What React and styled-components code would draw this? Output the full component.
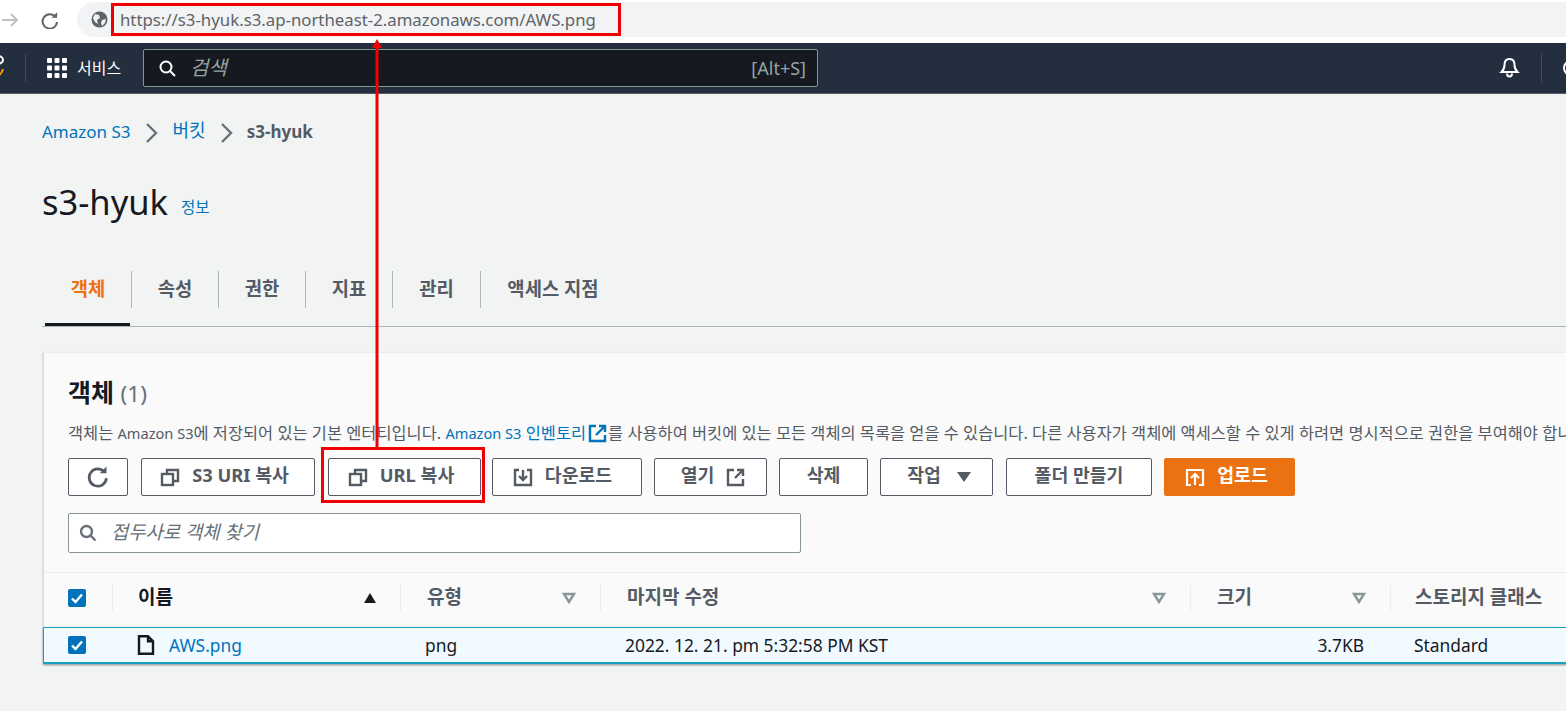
import React from "react";
import styled, { createGlobalStyle } from "styled-components";

const Global = createGlobalStyle`
  html, body { margin: 0; padding: 0; height: 711px; overflow: hidden; background: #f2f3f3; }
  body { font-family: "Noto Sans", "Noto Sans CJK KR", sans-serif; color: #16191f; }
  * { box-sizing: border-box; }
`;
const Page = styled.div`position: relative; width: 1566px; height: 711px; overflow: hidden;`;

const BrowserBar = styled.div`
  height: 43px; background: #fff; display: flex; align-items: flex-start; padding-top: 2px;
`;
const BackIcon = styled.svg`width: 18px; height: 18px; margin: 9px 0 0 1px; flex: none;`;
const ReloadIcon = styled.svg`width: 18px; height: 18px; margin: 9px 0 0 21px; flex: none;`;
const Pill = styled.div`
  flex: 1; height: 35px; margin-left: 19px; background: #f1f3f4;
  border-radius: 18px 0 0 18px; display: flex; align-items: center; padding-left: 14px;
`;
const GlobeIcon = styled.svg`width: 17px; height: 17px; flex: none;`;
const UrlText = styled.span`margin-left: 12px; font-size: 16.8px; color: #5f6368; white-space: nowrap;`;

const Nav = styled.div`
  height: 51px; background: #232f3e; border-bottom: 1px solid #545b64;
  display: flex; align-items: center; color: #fff;
`;
const LogoPiece = styled.svg`width: 4px; height: 26px; flex: none;`;
const NavSep = styled.div`width: 1px; height: 28px; background: #414d5c; flex: none; margin-left: ${p => p.$ml}px;`;
const GridIcon = styled.svg`width: 20px; height: 20px; margin-left: 21px; flex: none;`;
const ServicesLabel = styled.span`margin: 0 0 2px 10px; font-size: 16px; color: #fff; width: 66px; flex: none;`;
const SearchBox = styled.div`
  width: 675px; height: 38px; background: #16191f; border: 1px solid #879596; border-radius: 2px;
  display: flex; align-items: center; padding: 0 11px 0 15px; flex: none;
`;
const SearchGlyph = styled.svg`width: 17px; height: 17px; flex: none;`;
const SearchHint = styled.span`margin: 0 0 3px 14px; flex: 1; font-size: 20px; font-style: italic; color: #95a5a6;`;
const Shortcut = styled.span`font-size: 18px; color: #95a5a6; margin-bottom: 1px;`;
const BellIcon = styled.svg`width: 21px; height: 22px; margin-left: 681px; flex: none;`;
const PartCircle = styled.div`
  width: 16px; height: 16px; border: 2px solid #fff; border-radius: 50%; margin-left: 21px; flex: none;
`;

const Main = styled.main`padding: 0 0 0 42px; width: 1606px;`;
const Crumbs = styled.div`height: 76px; padding-top: 25px; display: flex; align-items: flex-start; font-size: 17px;`;
const CrumbLink = styled.span`
  color: #0073bb; line-height: 26px; font-size: ${p => p.$size || 17}px; margin-top: ${p => (p.$up ? -2 : 0)}px;
`;
const CrumbCurrent = styled.span`color: #545b64; font-weight: 700; line-height: 26px; margin-left: -1px;`;
const CrumbArrow = styled.svg`width: 14px; height: 20px; margin: 4px 14px 0 14px; flex: none;`;

const TitleRow = styled.div`height: 50px; margin-top: 8px; display: flex; align-items: center;`;
const Title = styled.h1`margin: 0 0 2px; font-size: 34.5px; font-weight: 400; color: #16191f; line-height: 50px;`;
const InfoLink = styled.span`margin: 7px 0 0 13px; font-size: 15.5px; color: #0073bb;`;

const Tabs = styled.div`
  margin-top: 43px; height: 56px; border-bottom: 1px solid #aab7b8; display: flex; align-items: flex-start;
`;
const Tab = styled.div`
  position: relative; width: ${p => p.$w}px; height: 55px; flex: none;
  font-size: 18.8px; font-weight: 600; color: ${p => (p.$active ? "#ec7211" : "#545b64")};
  display: flex; justify-content: center;
  margin-left: ${p => p.$ml || 0}px;
`;
const TabInner = styled.div`
  width: 100%; height: 37px; padding-bottom: 4px; display: flex; align-items: center; justify-content: center;
  border-right: ${p => (p.$last ? "none" : "1px solid #aab7b8")};
`;
const TabUnderline = styled.div`
  position: absolute; left: 0; right: 2px; bottom: 0; height: 3px; background: #16191f;
`;

const Card = styled.section`
  margin: 25px 0 0 1px; height: 312px; background: #fafafa; border-left: 1px solid #d5dbdb;
  border-top: 1px solid #eaeded; box-shadow: 0 1px 2px rgba(0,28,36,.2);
`;
const CardHead = styled.div`padding: 23px 0 0 24px; height: 219px;`;
const CardTitle = styled.h2`margin: 0; font-size: 25px; line-height: 32px; font-weight: 700; color: #16191f; height: 32px;`;
const Count = styled.span`font-weight: 400; color: #687078; font-size: 22.5px;`;
const Desc = styled.p`
  margin: 15px 0 0; font-size: 16.4px; line-height: 20px; color: #545b64; white-space: nowrap; height: 20px;
`;
const Latin = styled.span`font-size: 14.6px;`;
const DescLink = styled.span`color: #0073bb; margin: 0 1px 0 0;`;
const ExtIcon = styled.svg`width: 19px; height: 19px; margin: 0 1px; vertical-align: -4px;`;
const Toolbar = styled.div`display: flex; margin-top: 15px; height: 38px;`;
const Btn = styled.div`
  width: ${p => p.$w}px; margin-left: ${p => p.$ml || 0}px; height: 38px; flex: none;
  padding: 0 ${p => p.$pr || 0}px 0 ${p => p.$pl || 0}px;
  background: ${p => (p.$primary ? "#ec7211" : "#fff")};
  border: 1px solid ${p => (p.$primary ? "#ec7211" : "#545b64")}; border-radius: 2px;
  color: ${p => (p.$primary ? "#fff" : "#545b64")};
  font-size: 18.3px; font-weight: 700; white-space: nowrap;
  display: flex; align-items: center; justify-content: center; gap: ${p => p.$gap ?? 12}px;
`;
const BtnLabel = styled.span`margin-bottom: 6px;`;
const BtnIcon = styled.svg`width: 20px; height: 20px; flex: none;`;
const RefreshIcon = styled.svg`width: 24px; height: 24px; flex: none;`;
const CaretIcon = styled.svg`width: 14px; height: 12px; flex: none;`;
const FindBox = styled.div`
  width: 733px; height: 40px; margin-top: 17px; background: #fff; border: 1px solid #879596; border-radius: 2px;
  display: flex; align-items: center; padding-left: 10px;
`;
const FindGlyph = styled.svg`width: 18px; height: 18px; flex: none;`;
const FindHint = styled.span`margin: 0 0 4px 14px; font-size: 18.8px; font-style: italic; color: #687078;`;

const HeadRow = styled.div`
  height: 55px; padding-bottom: 4px; border-top: 1px solid #eaeded;
  display: grid; grid-template-columns: 68px 288px 200px 590px 200px 1fr; align-items: center;
`;
const HeadCell = styled.div`
  height: 26px; display: flex; align-items: center; padding: 0 ${p => p.$pr ?? 24}px 0 ${p => p.$pl ?? 26}px;
  border-left: 1px solid #eaeded;
  font-size: 19px; font-weight: 600; color: ${p => (p.$dark ? "#16191f" : "#545b64")};
  justify-content: space-between; white-space: nowrap;
`;
const HeadLabel = styled.span`margin-bottom: 4px;`;
const CheckCell = styled.div`padding-left: 24px; display: flex; align-items: center;`;
const CheckBox = styled.svg`width: 18px; height: 18px; display: block;`;
const SortIcon = styled.svg`width: 14px; height: 12px; flex: none;`;
const DataRow = styled.div`
  height: 37px; background: #f1faff; border: 1px solid #16a0c0; border-bottom-width: 2px; margin-left: -1px;
  display: grid; grid-template-columns: 68px 288px 200px 590px 200px 1fr; align-items: center;
  box-shadow: 0 1px 2px rgba(0,28,36,.3); font-size: 17.4px; color: #16191f;
`;
const NameCell = styled.div`padding-left: 25px; display: flex; align-items: center; color: #0073bb;`;
const FileIcon = styled.svg`width: 18px; height: 20px; flex: none; margin-right: 14px;`;
const Cell = styled.div`padding-left: ${p => p.$pl ?? 25}px; white-space: nowrap;`;
const SizeCell = styled.div`text-align: right; padding-right: 26px;`;

const Annotations = styled.svg`position: absolute; left: 0; top: 0; width: 1566px; height: 711px; pointer-events: none;`;

const Check = () => (
  <CheckBox viewBox="0 0 18 18">
    <rect width="18" height="18" rx="2" fill="#0073bb" />
    <path d="M4 9.5l3.5 3.5L14 5.5" fill="none" stroke="#fff" strokeWidth="2.4" />
  </CheckBox>
);
const Sort = ({ up }) =>
  up ? (
    <SortIcon viewBox="0 0 14 12"><path d="M7 1l6 10H1z" fill="#16191f" /></SortIcon>
  ) : (
    <SortIcon viewBox="0 0 14 12"><path d="M2 2h10L7 10z" fill="none" stroke="#879596" strokeWidth="2.4" /></SortIcon>
  );
const CopyIcon = () => (
  <BtnIcon viewBox="0 0 20 20" fill="none" stroke="#545b64" strokeWidth="2.4">
    <rect x="2" y="7" width="11" height="11" />
    <path d="M7 7V3h11v11h-5" />
  </BtnIcon>
);
const Reload = ({ color = "#545b64", w = 2.2 }) => (
  <>
    <path d="M15.5 6A7.2 7.2 0 1 0 17 11" fill="none" stroke={color} strokeWidth={w} />
    <path d="M11.5 6.8h5.6V1.2z" fill={color} />
  </>
);

export default function App() {
  return (
    <Page>
      <Global />
      <BrowserBar>
        <BackIcon viewBox="0 0 18 18" fill="none" stroke="#bdc1c6" strokeWidth="2">
          <path d="M1 9h15M10 3l6 6-6 6" />
        </BackIcon>
        <ReloadIcon viewBox="0 0 18 18">
          <Reload color="#5f6368" w={2} />
        </ReloadIcon>
        <Pill>
          <GlobeIcon viewBox="0 0 17 17">
            <circle cx="8.5" cy="8.5" r="8" fill="#5f6368" />
            <path d="M4 3l4 1 1 3-3 2 1 4-3-2-2-4zM11 9l4-1-1 4-3 3-1-3z" fill="#f1f3f4" />
          </GlobeIcon>
          <UrlText>https://s3-hyuk.s3.ap-northeast-2.amazonaws.com/AWS.png</UrlText>
        </Pill>
      </BrowserBar>
      <Nav>
        <LogoPiece viewBox="0 0 4 26" fill="none" strokeWidth="2">
          <path d="M-2 1C1 1 3 3 3 5C3 9 -2 8 -3 11" stroke="#fff" />
          <path d="M-4 21C-1 21 2 18 3 14" stroke="#ff9900" />
        </LogoPiece>
        <NavSep $ml={21} />
        <GridIcon viewBox="0 0 20 20" fill="#fff">
          {[0, 7.5, 15].flatMap(y =>
            [0, 7.5, 15].map(x => <rect key={`${x}-${y}`} x={x} y={y} width="5" height="5" rx="1" />)
          )}
        </GridIcon>
        <ServicesLabel>서비스</ServicesLabel>
        <SearchBox>
          <SearchGlyph viewBox="0 0 17 17" fill="none" stroke="#fff" strokeWidth="2">
            <circle cx="7" cy="7" r="5.5" />
            <path d="M11 11l5 5" />
          </SearchGlyph>
          <SearchHint>검색</SearchHint>
          <Shortcut>[Alt+S]</Shortcut>
        </SearchBox>
        <BellIcon viewBox="0 0 21 22" fill="none" stroke="#fff" strokeWidth="2">
          <path d="M10.5 2c-3.5 0-5 2.5-5 6 0 3-1 5-3 7h16c-2-2-3-4-3-7 0-3.5-1.5-6-5-6z" />
          <path d="M8 16.5c0 4 5 4 5 0" />
        </BellIcon>
        <NavSep $ml={21} />
        <PartCircle />
      </Nav>
      <Main>
        <Crumbs>
          <CrumbLink>Amazon S3</CrumbLink>
          <CrumbArrow viewBox="0 0 14 20" fill="none" stroke="#687078" strokeWidth="2.4">
            <path d="M2 1l9 9-9 9" />
          </CrumbArrow>
          <CrumbLink $size={18} $up>버킷</CrumbLink>
          <CrumbArrow viewBox="0 0 14 20" fill="none" stroke="#687078" strokeWidth="2.4">
            <path d="M2 1l9 9-9 9" />
          </CrumbArrow>
          <CrumbCurrent>s3-hyuk</CrumbCurrent>
        </Crumbs>
        <TitleRow>
          <Title>s3-hyuk</Title>
          <InfoLink>정보</InfoLink>
        </TitleRow>
        <Tabs>
          <Tab $w={87} $active $ml={3}>
            <TabInner>객체</TabInner>
            <TabUnderline />
          </Tab>
          <Tab $w={87}><TabInner>속성</TabInner></Tab>
          <Tab $w={87}><TabInner>권한</TabInner></Tab>
          <Tab $w={87}><TabInner>지표</TabInner></Tab>
          <Tab $w={88}><TabInner>관리</TabInner></Tab>
          <Tab $w={144}><TabInner $last>액세스 지점</TabInner></Tab>
        </Tabs>
        <Card>
          <CardHead>
            <CardTitle>객체 <Count>(1)</Count></CardTitle>
            <Desc>
              객체는 <Latin>Amazon S3</Latin>에 저장되어 있는 기본 엔터티입니다.{" "}
              <DescLink><Latin>Amazon S3</Latin> 인벤토리</DescLink>
              <ExtIcon viewBox="0 0 19 19" fill="none" stroke="#0073bb" strokeWidth="2.4">
                <path d="M8 2H2v15h15v-6M11 2h6v6M17 2L8 11" />
              </ExtIcon>
              를 사용하여 버킷에 있는 모든 객체의 목록을 얻을 수 있습니다. 다른 사용자가 객체에 액세스할 수 있게 하려면 명시적으로 권한을 부여해야 합니다.
            </Desc>
            <Toolbar>
              <Btn $w={60}>
                <RefreshIcon viewBox="0 0 20 20"><Reload /></RefreshIcon>
              </Btn>
              <Btn $w={174} $ml={13} $pr={7}><CopyIcon /><BtnLabel>S3 URI 복사</BtnLabel></Btn>
              <Btn $w={153} $ml={13} $pr={7}><CopyIcon /><BtnLabel>URL 복사</BtnLabel></Btn>
              <Btn $w={150} $ml={11} $pr={9}>
                <BtnIcon viewBox="0 0 20 20" fill="none" stroke="#545b64" strokeWidth="2.4">
                  <path d="M6 3H2v15h16V3h-4M10 3v9M6 9l4 4 4-4" />
                </BtnIcon>
                <BtnLabel>다운로드</BtnLabel>
              </Btn>
              <Btn $w={113} $ml={12} $pl={6}>
                <BtnLabel>열기</BtnLabel>
                <BtnIcon viewBox="0 0 20 20" fill="none" stroke="#545b64" strokeWidth="2.4">
                  <path d="M8 3H2v15h15v-6M11 3h6v6M17 3L9 11" />
                </BtnIcon>
              </Btn>
              <Btn $w={89} $ml={12}><BtnLabel>삭제</BtnLabel></Btn>
              <Btn $w={113} $ml={12} $pl={5} $gap={16}>
                <BtnLabel>작업</BtnLabel>
                <CaretIcon viewBox="0 0 14 12"><path d="M0 1h14L7 11z" fill="#545b64" /></CaretIcon>
              </Btn>
              <Btn $w={146} $ml={13}><BtnLabel>폴더 만들기</BtnLabel></Btn>
              <Btn $w={131} $ml={12} $primary $pr={6}>
                <BtnIcon viewBox="0 0 20 20" fill="none" stroke="#fff" strokeWidth="2.2">
                  <path d="M6 18H2V3h16v15h-4M10 18V8M6 11l4-4 4 4" />
                </BtnIcon>
                <BtnLabel>업로드</BtnLabel>
              </Btn>
            </Toolbar>
            <FindBox>
              <FindGlyph viewBox="0 0 18 18" fill="none" stroke="#687078" strokeWidth="2.4">
                <circle cx="7.5" cy="7.5" r="5.5" />
                <path d="M11.5 11.5l5 5" />
              </FindGlyph>
              <FindHint>접두사로 객체 찾기</FindHint>
            </FindBox>
          </CardHead>
          <HeadRow>
            <CheckCell><Check /></CheckCell>
            <HeadCell $dark $pl={25} $pr={23}><HeadLabel>이름</HeadLabel><Sort up /></HeadCell>
            <HeadCell><HeadLabel>유형</HeadLabel><Sort /></HeadCell>
            <HeadCell><HeadLabel>마지막 수정</HeadLabel><Sort /></HeadCell>
            <HeadCell><HeadLabel>크기</HeadLabel><Sort /></HeadCell>
            <HeadCell $pl={24} $pr={0}><HeadLabel>스토리지 클래스</HeadLabel></HeadCell>
          </HeadRow>
          <DataRow>
            <CheckCell><Check /></CheckCell>
            <NameCell>
              <FileIcon viewBox="0 0 18 20" fill="none" stroke="#16191f" strokeWidth="2.4">
                <path d="M2 1.2h9l5 5V18.800H2zM11 1.2v5h5" />
              </FileIcon>
              AWS.png
            </NameCell>
            <Cell>png</Cell>
            <Cell>2022. 12. 21. pm 5:32:58 PM KST</Cell>
            <SizeCell>3.7KB</SizeCell>
            <Cell $pl={24}>Standard</Cell>
          </DataRow>
        </Card>
      </Main>
      <Annotations viewBox="0 0 1566 711" fill="none" stroke="#f00000" strokeWidth="3">
        <rect x="112.5" y="4.5" width="507" height="30" />
        <rect x="322.5" y="448.5" width="161" height="53" />
        <path d="M377 48V447" />
        <path d="M377 39l-5 9h10z" fill="#f00000" stroke="none" />
      </Annotations>
    </Page>
  );
}
